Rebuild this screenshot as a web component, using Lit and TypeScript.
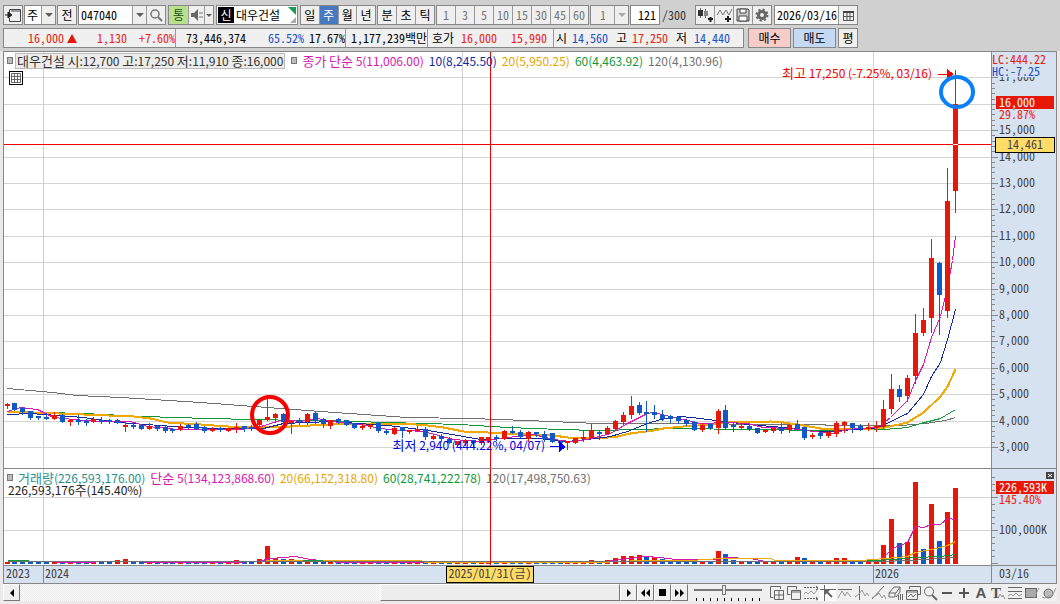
import { LitElement, html, svg, css } from "lit";
import { customElement, state } from "lit/decorators.js";

const UP = "#e81808";
const DOWN = "#1058c8";
const MA5 = "#d818b0";
const MA10 = "#1428a0";
const MA20 = "#f0a800";
const MA60 = "#109838";
const MA120 = "#707070";
const BASE_W = 987;

/* high, body top, body bottom, low, direction (1 up, 0 down), volume height */
const BARS: number[][] = [
  [403,404,406,408,1,2],[403,403,410,410,0,2],[407,408,412,414,0,2],[411,411,418,419,0,2],
  [416,416,417,419,0,2],[413,417,419,419,0,2],[412,415,419,419,1,2],[414,415,422,422,0,2],
  [419,420,421,425,1,2],[415,420,422,424,0,2],[419,421,422,425,0,2],[417,419,422,422,1,2],
  [417,420,421,423,0,2],[419,420,421,423,0,2],[419,420,423,423,1,4],[422,425,426,431,1,5],
  [422,425,426,428,0,2],[424,425,429,429,0,2],[423,426,429,429,1,2],[425,426,429,430,0,2],
  [426,427,431,432,0,2],[428,429,430,432,0,2],[424,426,429,430,1,2],[424,425,426,428,0,2],
  [422,424,429,429,0,2],[426,427,431,432,0,2],[427,429,431,431,1,2],[427,428,430,431,0,2],
  [428,428,431,431,1,2],[423,427,429,432,1,4],[426,426,429,431,0,2],[425,427,429,430,0,2],
  [419,420,425,425,1,5],[395,417,420,420,1,18],[413,414,418,422,1,6],[413,414,422,424,0,5],
  [420,421,422,433,1,5],[418,420,422,424,0,2],[413,414,422,424,1,3],[412,413,421,423,0,3],
  [418,419,424,427,0,2],[420,420,426,428,1,2],[418,419,421,423,0,2],[420,420,425,425,0,2],
  [423,423,428,428,0,2],[424,426,427,429,1,2],[424,425,427,428,1,2],[422,423,431,432,0,2],
  [429,431,432,434,0,2],[427,428,434,434,1,2],[427,427,431,437,0,2],[430,430,432,433,1,2],
  [426,429,431,431,1,2],[427,429,437,439,0,2],[434,436,439,439,1,2],[434,436,439,441,0,2],
  [437,439,443,443,0,2],[441,441,445,445,1,2],[439,440,443,445,1,2],[440,440,443,446,0,2],
  [437,437,443,444,1,2],[437,437,440,442,1,2],[435,437,439,440,0,2],[430,431,439,439,1,2],
  [426,431,432,433,0,2],[430,432,437,437,0,2],[431,432,439,441,1,2],[432,432,434,436,0,2],
  [431,434,439,441,0,2],[433,433,442,442,0,2],[441,441,443,446,0,2],[441,441,443,449,1,2],
  [438,438,443,443,1,2],[430,437,439,441,1,2],[424,430,438,438,1,4],[431,432,434,439,0,2],
  [426,428,434,434,1,4],[420,421,429,430,1,6],[412,415,422,424,1,8],[396,406,415,418,1,8],
  [402,405,413,414,1,9],[401,412,414,431,0,7],[405,412,415,418,0,7],[410,415,419,420,0,5],
  [415,416,419,422,0,3],[416,417,421,423,0,2],[419,420,424,425,0,2],[421,422,430,430,0,2],
  [423,425,430,431,1,2],[423,424,428,429,0,2],[409,411,428,433,1,13],[405,410,428,429,0,10],
  [423,425,427,431,0,4],[423,426,427,428,1,3],[424,426,429,430,0,2],[428,428,433,433,0,2],
  [429,430,432,432,1,2],[428,428,431,432,1,2],[423,428,431,433,0,2],[424,425,430,432,1,2],
  [420,424,429,430,0,7],[427,427,438,439,0,6],[433,435,437,438,1,3],[432,433,436,438,0,2],
  [431,432,436,437,1,2],[421,423,434,436,1,6],[421,422,425,432,1,6],[423,423,428,432,0,2],
  [424,426,429,430,0,2],[423,427,429,430,1,2],[421,426,428,431,1,3],[400,409,427,429,1,19],
  [374,389,409,413,1,45],[385,389,397,401,0,21],[375,378,396,401,1,22],[314,333,376,383,1,82],
  [308,320,333,335,1,15],[239,258,318,332,1,60],[262,263,295,334,0,23],[168,201,311,317,1,52],
  [70,104,191,212,1,76],
];
/* bars whose candle and volume colours differ */
const CANDLE_DOWN = new Set([14, 80]);
const VOLUME_UP = new Set([82, 100]);
const VOLUME_DOWN = new Set([116]);

type Line = { color: string; width: number; pts: number[] };

const PRICE_LINES: Line[] = [
  { color: MA120, width: 1, pts: [7,388,52,392,76,395,120,397,200,402,240,405,280,408,320,411,407,417,470,418,527,420,597,423,690,423,766,424,822,424,828,425,870,425,900,425,925,423,945,420,955,417] },
  { color: MA60, width: 1, pts: [7,411,83,413,143,416,207,418,300,420,320,420,387,422,460,424,507,427,560,429,597,430,640,429,667,428,757,429,820,430,857,429,884,429,907,427,920,423,940,418,955,409] },
  { color: MA20, width: 2, pts: [7,411,33,412,83,414,133,416,150,418,167,422,200,424,227,426,260,427,290,426,330,424,353,423,403,423,427,425,443,427,463,431,487,432,527,434,553,435,567,437,597,438,617,436,630,433,653,430,663,428,683,426,713,424,723,422,770,421,783,422,803,425,820,428,873,428,885,427,907,422,923,412,940,396,947,386,955,369] },
  { color: MA10, width: 1, pts: [7,414,30,413,83,417,117,422,160,425,187,427,217,428,263,428,283,423,307,422,330,421,387,425,427,430,463,436,480,439,507,438,537,438,567,441,587,439,610,436,627,431,647,423,660,419,680,416,700,418,723,421,747,424,783,427,813,431,833,431,853,429,873,428,880,426,907,413,923,394,931,376,940,362,947,339,955,309] },
  { color: MA5, width: 1, pts: [7,411,20,407,37,409,53,417,73,419,100,421,130,421,147,426,177,429,240,429,257,427,267,424,283,419,300,421,317,418,330,421,353,423,387,429,423,431,453,439,480,441,507,437,533,434,553,439,570,441,587,439,610,433,627,423,647,413,653,412,670,416,700,423,727,422,747,423,763,427,790,428,813,431,833,433,847,429,873,427,880,425,890,417,907,400,915,380,923,364,931,337,940,316,947,287,952,260,955,236] },
];

const VOLUME_LINES: Line[] = [
  { color: MA5, width: 1, pts: [7,561,43,561,65,562,125,561,160,562,230,562,258,561,270,558,295,556,310,559,340,562,600,562,612,560,630,558,645,556,660,557,675,559,715,559,725,557,750,558,765,561,800,560,880,560,892,548,907,542,915,526,923,527,931,524,940,524,947,518,955,519] },
  { color: MA20, width: 1, pts: [7,561,262,561,270,560,420,560,425,562,600,562,640,560,690,560,720,558,770,558,775,560,860,560,885,558,907,556,915,552,931,549,940,547,947,545,955,541] },
  { color: MA60, width: 1, pts: [7,560,26,560,30,561,300,561,305,560,320,560,325,561,700,561,860,561,890,559,915,557,940,556,955,554] },
  { color: MA120, width: 1, pts: [7,561,600,561,880,561,910,560,940,558,955,557] },
];

/* Hangul runs carry their own class so that their size can differ from the numerals beside them. */
const split = (s: string) => s.split(/([가-힣]+)/).filter(Boolean);
const t = (s: string) => split(s).map((p) => (/[가-힣]/.test(p) ? html`<span class="ko">${p}</span>` : p));
const ts = (s: string) => split(s).map((p) => (/[가-힣]/.test(p) ? svg`<tspan class="ko">${p}</tspan>` : svg`<tspan>${p}</tspan>`));

const icon = (body: unknown, w = 16, h = 16) =>
  html`<svg class="ico" width=${w} height=${h} viewBox="0 0 ${w} ${h}" aria-hidden="true">${body}</svg>`;

const arrow = (color = "#606060") => icon(svg`<path d="M0 0h8L4 4z" fill=${color}/>`, 8, 4);

const TOOLS: [string, unknown][] = [
  ["새 창", svg`<path d="M11.500 4V1.500h-10v11h3" class="s"/><path d="M5.500 5.500h9v9h-9zM10 5.500v9M5.500 10h9" class="s"/>`],
  ["창 복사", svg`<path d="M10.500 4.500v-3h-9v8h3" class="s"/><path d="M5.500 5.500h9v9h-9zM5.500 7h9" class="s"/>`],
  ["구간", svg`<path d="M1 2.500h14M1 13.500h14" class="s" stroke-dasharray="2 1"/><path d="M1 9l2-2 2 2 3-3 3 3 4-5" class="s thin"/><path d="M13 1l2 2-2 2M13 12l2 2-2 1" class="s"/>`],
  ["십자선", svg`<path d="M4.500 0v16M0 4.500h16" class="s"/><path d="M6 6l6 6" class="s" stroke-width="2"/><path d="M5 5h5l-5 5z" fill="#666"/>`],
  ["수평선", svg`<path d="M1 4.500h14" class="s"/><path d="M1 13l4-7 3 5 2-4 4 5" class="s thin"/>`],
  ["수직선", svg`<path d="M5.500 1v14" class="s"/><path d="M1 12l4-3 3-4 3 6 2-3 2 3" class="s thin"/>`],
  ["추세선", svg`<path d="M1 14L13 1" class="s"/><path d="M1 13l5-3 2-2 3 5 2-3 2 4" class="s thin"/>`],
  ["지우기", svg`<path d="M1 8l5-6h6L8 8zM1 8v4h6V8M8 12l4-5V2" class="s"/><path d="M10.500 10v5M12.500 9v6M14.500 9v6" class="s"/>`],
  ["차트 겹침", svg`<path d="M4.500 4V1.500h11v8H13" class="s"/><path d="M1.500 5.500h11v9h-11zM1.500 7h11" class="s"/><path d="M3 12l3-3 2 3 3-3" class="s"/>`],
  ["확대경", svg`<circle cx="7" cy="6.500" r="4.500" class="s"/><path d="M10 10l5 5" class="s" stroke-width="2"/>`],
  ["축소", svg`<path d="M3 8h10" stroke="#555" stroke-width="2"/>`],
  ["확대", svg`<path d="M3 8h10M8 3v10" stroke="#555" stroke-width="2"/>`],
  ["글자", svg`<text class="glyph" x="8" y="13" text-anchor="middle">A</text>`],
  ["문자 표시", svg`<text class="glyph serif" x="6" y="13" text-anchor="middle">T</text><path d="M8 13l2-4 2 3 1-2 2 4" class="s thin"/>`],
  ["피보나치", svg`<path d="M1 2.500h14M1 6.500h14M1 13.500h14" class="s"/><path d="M1 11l3-2 2 2 3-3 3 3 3-2" class="s thin"/>`],
  ["사각형", svg`<rect x="1.500" y="3.500" width="11" height="9" fill="#aaa" stroke="#666"/><path d="M10 13l5-10" class="s thin"/>`],
  ["원", svg`<circle cx="7.500" cy="8.500" r="4.500" fill="#bbb" stroke="#666"/><path d="M1 12l3 1 4-2 3 0 4-8" class="s thin"/>`],
];

@customElement("app-root")
export class AppRoot extends LitElement {
  @state() private plotWidth = BASE_W;
  private observer?: ResizeObserver;

  static styles = css`
    :host { display: block; min-height: 100vh; background: #ebe9e9; color: #000;
      font: 12px/16px "Noto Sans Mono CJK KR", "Noto Sans CJK KR", monospace; }
    * { box-sizing: border-box; }
    button, input, select { font: inherit; color: inherit; margin: 0; padding: 0; border: 0; border-radius: 0; background: none; appearance: none; min-width: 0; }
    .ico { display: block; flex: none; overflow: visible; }
    .s { fill: none; stroke: #666; }
    .thin { stroke: #999; }
    .bars { display: flex; flex-direction: column; gap: 3px; padding: 5px 3px 3px; background: #d0d0d0; }
    .row { display: flex; gap: 1px; height: 20px; }
    .grp { display: flex; border: 1px solid #888; background: #efefef; }
    .grp > * + * { border-left: 1px solid #999; }
    .sp { margin-left: 1px; }
    .w20 { width: 20px; } .w30 { width: 30px; } .w32 { width: 32px; } .w39 { width: 39px; } .w46 { width: 46px; }
    .w58 { width: 58px; } .w76 { width: 76px; } .w77 { width: 77px; } .w82 { width: 82px; } .w84 { width: 84px; } .w88 { width: 88px; } .w153 { width: 153px; }
    .cell { flex: 1; display: flex; align-items: center; justify-content: center; }
    .fix13 { flex: 0 0 14px; } .fix19 { flex: 0 0 19px; } .fix8 { flex: 0 0 9px; }
    .field { flex: 1; background: #fff; padding: 0 0 0 2px; width: 0; }
    .off { color: #777; }
    .off .field { background: #eee; color: #777; padding: 0 9px; }
    .on { background: #4878c0; color: #fff; }
    .green { background: #b8e090; color: #205010; }
    .name { background: #fff; align-items: stretch; position: relative; padding: 1px; gap: 2px; }
    .tag { width: 16px; background: #000; color: #fff; text-align: center; }
    .name > .label { border: 0; }
    .corner { position: absolute; right: 0; top: 0; border: 0; }
    .grp .right { text-align: right; padding-right: 3px; }
    .total { display: flex; align-items: center; padding-left: 1px; width: 33px; color: #333; }
    .info { width: 741px; display: flex; border: 1px solid #888; background: #f0f0f0; margin-right: 3px; white-space: nowrap; line-height: 18px; }
    .part { display: flex; }
    .part + .part { border-left: 1px solid #999; }
    .part.quote { padding-right: 6px; }
    .part > span { text-align: right; }
    .c60 { width: 60px; } .c43 { width: 43px; } .c22 { width: 22px; } .c41 { width: 41px; } .c48 { width: 48px; } .c50 { width: 50px; } .c58 { width: 58px; } .c70 { width: 70px; } .c81 { width: 81px; } .c26 { width: 26px; } .c13 { width: 13px; } .c19 { width: 19px; }
    .c22 { display: grid; place-items: center start; padding-left: 3px; }
    .red { color: #e82010; } .blue { color: #1850c8; }
    .trade { width: 43px; border: 1px solid #888; margin-right: 1px; }
    .buy { background: #f6ccc8; } .sell { background: #c4daf4; } .avg { width: 20px; border: 1px solid #888; background: #efefef; }

    .chart { margin: 0 3px; border: 1px solid #888; display: grid; grid-template-columns: minmax(0, 1fr) 65px; background: #fff; }
    .pane { position: relative; overflow: hidden; }
    .axis { background: #d6e2f0; border-left: 1px solid #888; overflow: hidden; }
    .price { height: 416px; } .volume { height: 97px; border-top: 1px solid #888; } .dates { height: 18px; border-top: 1px solid #888; background: #d6e2f0; }
    .pane > svg, .axis > svg { display: block; }
    .cv { shape-rendering: crispEdges; }
    text { font-family: "Noto Sans Mono CJK KR", "Noto Sans CJK KR", monospace; font-size: 12px; }
    .note { font-family: "Noto Sans CJK KR", sans-serif; }
    .note .ko { font-size: 13px; }
    .glyph { font: 700 15px "Liberation Sans", sans-serif; fill: #555; }
    .glyph.serif { font-family: "Liberation Serif", serif; }
    .lbl { fill: #444; }
    .legend, .sum { font-family: "Noto Sans CJK KR", sans-serif; white-space: nowrap; }
    .legend .ko, .sum .ko { font-size: 13px; }
    .legend { position: absolute; left: 3px; top: 0; display: flex; align-items: center; height: 17px; }
    .line { padding-right: 5px; }
    .mark { width: 6px; height: 7px; border: 1px solid #777; background: #bbb; margin-right: 5px; }
    .head { border: 1px solid #bbb; background: #ececea; color: #333; height: 16px; line-height: 14px; padding: 0 1px; margin: 0 6px 0 -3px; }
    .sum { position: absolute; left: 4px; top: 13px; color: #222; }
    .grid { position: absolute; left: 5px; top: 19px; width: 14px; height: 14px; border: 1px solid #000; background: #fff; display: grid; place-items: center; }
    .m5 { color: #d818b0; } .m10 { color: #1428a0; } .m20 { color: #e8a400; } .m60 { color: #109838; } .m120 { color: #707070; } .teal { color: #289090; }

    .foot { display: flex; margin: 0 3px; height: 17px; background: #f0f0f0; }
    .sbtn { width: 17px; border: 1px solid; border-color: #fff #777 #777 #fff; outline: 0; background: #f0f0f0; display: grid; place-items: center; }
    .track { flex: 1; display: flex; justify-content: flex-end; background: repeating-conic-gradient(#fff 0 25%, #e8e8e8 0 50%) 0 0 / 2px 2px; }
    .thumb { width: 40%; border: 1px solid; border-color: #fff #777 #777 #fff; background: #ededed; }
    .zoom { width: 80px; padding: 0 6px; display: flex; flex-direction: column; justify-content: space-between; }
    .zoom input { width: 100%; height: 11px; background: linear-gradient(#777, #777) 0 5px / 100% 2px no-repeat; }
    .zoom input::-webkit-slider-thumb { appearance: none; width: 4px; height: 10px; background: #eee; border: 1px solid #777; }
    .ticks { display: flex; justify-content: space-between; padding: 0 2px; }
    .ticks i { width: 1px; height: 3px; background: #000; }
    .tools { display: flex; }
    .tool { width: 17px; display: grid; place-items: center; }
    .tool.sel { background: #fff; }
  `;

  firstUpdated() {
    const pane = this.renderRoot.querySelector(".price") as HTMLElement;
    this.observer = new ResizeObserver(() => { this.plotWidth = pane.clientWidth || BASE_W; });
    this.observer.observe(pane);
  }

  disconnectedCallback() {
    super.disconnectedCallback();
    this.observer?.disconnect();
  }

  private x(v: number) { return Math.floor((v - 4) * this.plotWidth / BASE_W); }
  private barX(i: number) { return this.x(7 + 7.9 * i); }

  private line(l: Line, top: number) {
    const pts: string[] = [];
    for (let i = 0; i < l.pts.length; i += 2) pts.push(`${this.x(l.pts[i]) + 0.5},${l.pts[i + 1] - top + 0.5}`);
    return svg`<polyline points=${pts.join(" ")} fill="none" stroke=${l.color} stroke-width=${l.width}/>`;
  }

  private gridLines(ys: number[], h: number) {
    return svg`
      ${ys.map((y) => svg`<rect x="0" y=${y} width=${this.plotWidth} height="1" fill="#d4d4d4"/>`)}
      ${[43, 462, 873].map((v) => svg`<rect x=${this.x(v)} y="0" width="1" height=${h} fill="#d0d0d0"/>`)}`;
  }

  private priceSvg() {
    const top = 52;
    const ys = Array.from({ length: 15 }, (_, i) => Math.round(395 - 26.4 * i));
    return html`<svg width=${this.plotWidth} height="416" role="img" aria-label="대우건설 주봉 차트">
      <g class="cv">
        ${this.gridLines(ys, 416)}
        ${PRICE_LINES.map((l) => this.line(l, top))}
        ${BARS.map((b, i) => {
          const c = b[4] && !CANDLE_DOWN.has(i) ? UP : DOWN;
          const cx = this.barX(i);
          return svg`<rect x=${cx} y=${b[0] - top} width="1" height=${b[3] - b[0] + 1} fill=${c}/>
            <rect x=${cx - 2} y=${b[1] - top} width="5" height=${Math.max(2, b[2] - b[1])} fill=${c}/>`;
        })}
        <rect x=${this.x(490)} y="0" width="1" height="416" fill="#f00000"/>
        <rect x="0" y="92" width=${this.plotWidth} height="1" fill="#f00000"/>
        <rect x=${this.barX(120) - 2} y="92" width="5" height="1" fill="#fff"/>
        <rect x=${this.x(938)} y="22" width="11" height="1" fill="#f00000"/>
        <path d="M${this.x(947)} 17v10l7-5z" fill="#f00000"/>
        <rect x=${this.x(550)} y="394" width="10" height="1" fill="#0000f0"/>
        <path d="M${this.x(559)} 389v11l7-5z" fill="#0000f0"/>
      </g>
      <text class="note" x=${this.x(932)} y="26" text-anchor="end" fill="#f00000">${ts("최고 17,250 (-7.25%, 03/16)")}</text>
      <text class="note" x=${this.x(545)} y="398" text-anchor="end" fill="#0000d8">${ts("최저 2,940 (444.22%, 04/07)")}</text>
      <circle cx=${this.x(270)} cy="363" r="18" fill="none" stroke="#f80000" stroke-width="4"/>
      <ellipse cx=${this.x(957)} cy="40" rx="16" ry="15" fill="none" stroke="#0a80f8" stroke-width="4"/>
    </svg>`;
  }

  private priceAxis() {
    const minor = Array.from({ length: 73 }, (_, i) => Math.round(395 - 5.28 * i)).filter((y) => y > 24);
    const labels = Array.from({ length: 15 }, (_, i) => i);
    return html`<svg width="64" height="416">
      <g class="cv">
        ${minor.map((y) => svg`<rect x="0" y=${y} width="3" height="1" fill="#888"/>`)}
        ${labels.map((i) => svg`<rect x="0" y=${Math.round(395 - 26.4 * i)} width="6" height="1" fill="#888"/>`)}
      </g>
      ${labels.map((i) => svg`<text class="lbl" x="7" y=${Math.round(395 - 26.4 * i) + 4}>${`${3 + i},000`}</text>`)}
      <rect x="0" y="0" width="64" height="25" fill="#d6e2f0"/>
      <text x="0" y="12" fill="#e82010">LC:444.22</text>
      <text x="0" y="24" fill="#1850c8">HC:-7.25</text>
      <rect x="4" y="44" width="58" height="13" fill="#e81808"/>
      <text x="7" y="55" fill="#fff">16,000</text>
      <text x="7" y="67" fill="#e82010">29.87%</text>
      <rect x="3" y="85" width="59" height="15" fill="#ffdc68" stroke="#000" class="cv"/>
      <text x="15" y="97" class="lbl">14,461</text>
    </svg>`;
  }

  private volumeSvg() {
    const top = 469;
    return html`<svg width=${this.plotWidth} height="96" role="img" aria-label="거래량 차트">
      <g class="cv">
        ${this.gridLines([28, 61], 96)}
        ${BARS.map((b, i) => svg`<rect x=${this.barX(i) - 2} y=${95 - b[5]} width="5" height=${b[5]}
          fill=${(b[4] && !VOLUME_DOWN.has(i)) || VOLUME_UP.has(i) ? UP : DOWN}/>`)}
        ${VOLUME_LINES.map((l) => this.line(l, top))}
        <rect x=${this.x(490)} y="0" width="1" height="96" fill="#f00000"/>
      </g>
    </svg>`;
  }

  private volumeAxis() {
    const minor = Array.from({ length: 14 }, (_, i) => Math.round(94 - 6.6 * i));
    return html`<svg width="64" height="96">
      <g class="cv">
        ${minor.map((y, i) => svg`<rect x="0" y=${y} width=${i % 5 ? 3 : 6} height="1" fill="#888"/>`)}
        <rect x="54" y="3" width="8" height="7" fill="#444"/>
      </g>
      <path d="M56 5l4 3M60 5l-4 3" stroke="#fff"/>
      <rect x="4" y="12" width="58" height="13" fill="#e81808"/>
      <text x="7" y="23" fill="#fff">226,593K</text>
      <text x="7" y="35" fill="#e82010">145.40%</text>
      <text class="lbl" x="7" y="65">100,000K</text>
    </svg>`;
  }

  private dateSvg() {
    return html`<svg width=${this.plotWidth} height="17">
      <g class="cv">${[43, 873].map((v) => svg`<rect x=${this.x(v)} y="0" width="1" height="17" fill="#888"/>`)}</g>
      <text class="lbl" x=${this.x(6)} y="12">2023</text>
      <text class="lbl" x=${this.x(45)} y="12">2024</text>
      <text class="lbl" x=${this.x(875)} y="12">2026</text>
      <rect class="cv" x=${this.x(446) + 0.5} y="0.500" width="87" height="16" fill="#ffdc68" stroke="#000"/>
      <text class="lbl" x=${this.x(490)} y="12" text-anchor="middle">${ts("2025/01/31(금)")}</text>
    </svg>`;
  }

  private toolbar() {
    const btn = (s: string, cls = "") => html`<button class="cell ${cls}">${t(s)}</button>`;
    return html`<div class="row">
      <div class="grp w20"><button class="cell" aria-label="패널 열기">${icon(svg`<path d="M4.500 5V1.500h11v12h-11V10M6 3h9" fill="none" stroke="#444"/><path d="M0 7h6M3 4v6l4-3z" fill="#222" stroke="#222"/>`, 16, 15)}</button></div>
      <label class="grp w32"><select class="field" aria-label="차트 종류"><option>주</option></select><span class="cell fix13">${arrow()}</span></label>
      <div class="grp w20">${btn("전")}</div>
      <div class="grp w88"><input class="field" aria-label="종목 코드" value="047040"><button class="cell fix13" aria-label="종목 목록">${arrow()}</button><button class="cell fix19" aria-label="검색">${icon(svg`<circle cx="5" cy="5" r="4" fill="none" stroke="#777" stroke-width="1.500"/><path d="M8 8l4 4" stroke="#777" stroke-width="2"/>`, 13, 13)}</button></div>
      <div class="grp w46 sp"><button class="cell green fix19">${t("통")}</button><button class="cell" aria-label="소리">${icon(svg`<path d="M0 4h3l4-4v12L3 8H0z" fill="#666"/><path d="M9 3v2M9 7v2M11 3v2M11 7v2" stroke="#777"/>`, 12, 12)}</button><button class="cell fix8" aria-label="소리 설정">${icon(svg`<path d="M0 0h6L3 3z" fill="#606060"/>`, 6, 3)}</button></div>
      <div class="grp w82 name sp"><span class="tag">${t("신")}</span><span class="label">${t("대우건설")}</span><svg class="corner" width="9" height="18" aria-hidden="true"><path d="M0 1h8v8z" fill="#10a050"/><path d="M8 11v6H2z" fill="#aaa"/></svg></div>
      <div class="grp w76 sp">${btn("일")}${btn("주", "on")}${btn("월")}${btn("년")}</div>
      <div class="grp w58">${btn("분")}${btn("초")}${btn("틱")}</div>
      <div class="grp w153 off">${["1", "3", "5", "10", "15", "30", "45", "60"].map((n) => btn(n))}</div>
      <label class="grp w39 off"><select class="field" aria-label="간격"><option>1</option></select><span class="cell fix13">${arrow("#aaa")}</span></label>
      <label class="grp w30"><input class="field right" aria-label="봉 개수" value="121"></label>
      <span class="total">/300</span>
      <div class="grp w77">
        <button class="cell" aria-label="봉 유형">${icon(svg`<path d="M2.500 0v10M7.500 1v9" stroke="#666"/><path d="M0 2h5v6H0z" fill="#333"/><path d="M6 3h4v5H6z" fill="#888"/><path d="M10 11h5M12.500 9v5" stroke="#222" stroke-width="2"/>`, 15, 14)}</button>
        <button class="cell" aria-label="지표 추가">${icon(svg`<path d="M0 7l3-5 3 5 3-5 3 5 3-6" fill="none" stroke="#777"/><path d="M8 11h6M11 8v6" stroke="#222" stroke-width="2"/>`, 15, 14)}</button>
        <button class="cell" aria-label="저장">${icon(svg`<path d="M1 1h11l1 1v11H1z" fill="#ccc" stroke="#444"/><path d="M4 1h6v4H4zM3 8h8v5H3z" fill="#fff" stroke="#444"/>`, 14, 14)}</button>
        <button class="cell" aria-label="설정">${icon(svg`<circle cx="7" cy="7" r="3.500" fill="none" stroke="#666" stroke-width="3"/><circle cx="7" cy="7" r="5.500" fill="none" stroke="#666" stroke-width="2" stroke-dasharray="2.200 2.100"/>`, 14, 14)}</button>
      </div>
      <div class="grp w84 sp"><input class="field" aria-label="날짜" value="2026/03/16"><button class="cell fix19" aria-label="달력">${icon(svg`<path d="M.5 2.500h10v8H.5zM.5 6.500h10M4 3v8M7 3v8" fill="none" stroke="#555"/><path d="M0 1h11v2H0z" fill="#444"/>`, 11, 11)}</button></div>
    </div>`;
  }

  private quoteBar() {
    return html`<div class="row">
      <div class="info">
        <div class="part"><span class="c60 red">16,000</span><span class="c22">${icon(svg`<path d="M5 0l5 9H0z" fill="#e81808"/>`, 10, 9)}</span><span class="c41 red">1,130</span><span class="c48 red">+7.60%</span></div>
        <div class="part"><span class="c70">73,446,374</span><span class="c58 blue">65.52%</span><span class="c41">17.67%</span></div>
        <div class="part"><span class="c81">${t("1,177,239백만")}</span></div>
        <div class="part quote"><span class="c26">${t("호가")}</span><span class="c43 red">16,000</span><span class="c50 red">15,990</span></div>
        <div class="part"><span class="c13">${t("시")}</span><span class="c41 blue">14,560</span><span class="c19">${t("고")}</span><span class="c41 red">17,250</span><span class="c19">${t("저")}</span><span class="c43 blue">14,440</span></div>
      </div>
      <button class="trade buy">${t("매수")}</button>
      <button class="trade sell">${t("매도")}</button>
      <button class="avg">${t("평")}</button>
    </div>`;
  }

  render() {
    return html`
      <header class="bars">${this.toolbar()}${this.quoteBar()}</header>
      <main class="chart">
        <section class="pane price">
          ${this.priceSvg()}
          <div class="legend"><span class="mark"></span><span class="head">${t("대우건설 시:12,700 고:17,250 저:11,910 종:16,000")}</span><span class="mark"></span>
            <span class="line m5">${t("종가 단순 5(11,006.00)")}</span><span class="line m10">10(8,245.50)</span><span class="line m20">20(5,950.25)</span><span class="line m60">60(4,463.92)</span><span class="line m120">120(4,130.96)</span></div>
          <button class="grid" aria-label="표로 보기">${icon(svg`<path d="M.5.500h9v9h-9zM.5 3.500h9M.5 6.500h9M3.500.500v9M6.500.500v9" fill="none" stroke="#666"/>`, 10, 10)}</button>
        </section>
        <div class="axis price">${this.priceAxis()}</div>
        <section class="pane volume">
          ${this.volumeSvg()}
          <div class="legend"><span class="mark"></span><span class="line teal">${t("거래량(226,593,176.00)")}</span><span class="line m5">${t("단순 5(134,123,868.60)")}</span><span class="line m20">20(66,152,318.80)</span><span class="line m60">60(28,741,222.78)</span><span class="line m120">120(17,498,750.63)</span></div>
          <div class="sum">${t("226,593,176주(145.40%)")}</div>
        </section>
        <div class="axis volume">${this.volumeAxis()}</div>
        <div class="pane dates">${this.dateSvg()}</div>
        <div class="axis dates"><svg width="64" height="17"><text class="lbl" x="7" y="12">03/16</text></svg></div>
      </main>
      <footer class="foot">
        <button class="sbtn" aria-label="왼쪽">${icon(svg`<path d="M4 0v8L0 4z"/>`, 4, 8)}</button>
        <div class="track"><div class="thumb"></div></div>
        <button class="sbtn" aria-label="오른쪽">${icon(svg`<path d="M0 0v8l4-4z"/>`, 4, 8)}</button>
        <button class="sbtn" aria-label="뒤로">${icon(svg`<path d="M4 0v8L0 4zM9 0v8L5 4z"/>`, 9, 8)}</button>
        <button class="sbtn" aria-label="정지">${icon(svg`<path d="M0 0h7v7H0z"/>`, 7, 7)}</button>
        <button class="sbtn" aria-label="앞으로">${icon(svg`<path d="M0 0v8l4-4zM5 0v8l4-4z"/>`, 9, 8)}</button>
        <div class="zoom"><input type="range" min="0" max="100" value="43" aria-label="배율"><div class="ticks">${Array.from({ length: 10 }, () => html`<i></i>`)}</div></div>
        <div class="tools">${TOOLS.map(([label, body], i) => html`<button class="tool ${i === 3 ? "sel" : ""}" aria-label=${label}>${icon(body)}</button>`)}</div>
      </footer>`;
  }
}
